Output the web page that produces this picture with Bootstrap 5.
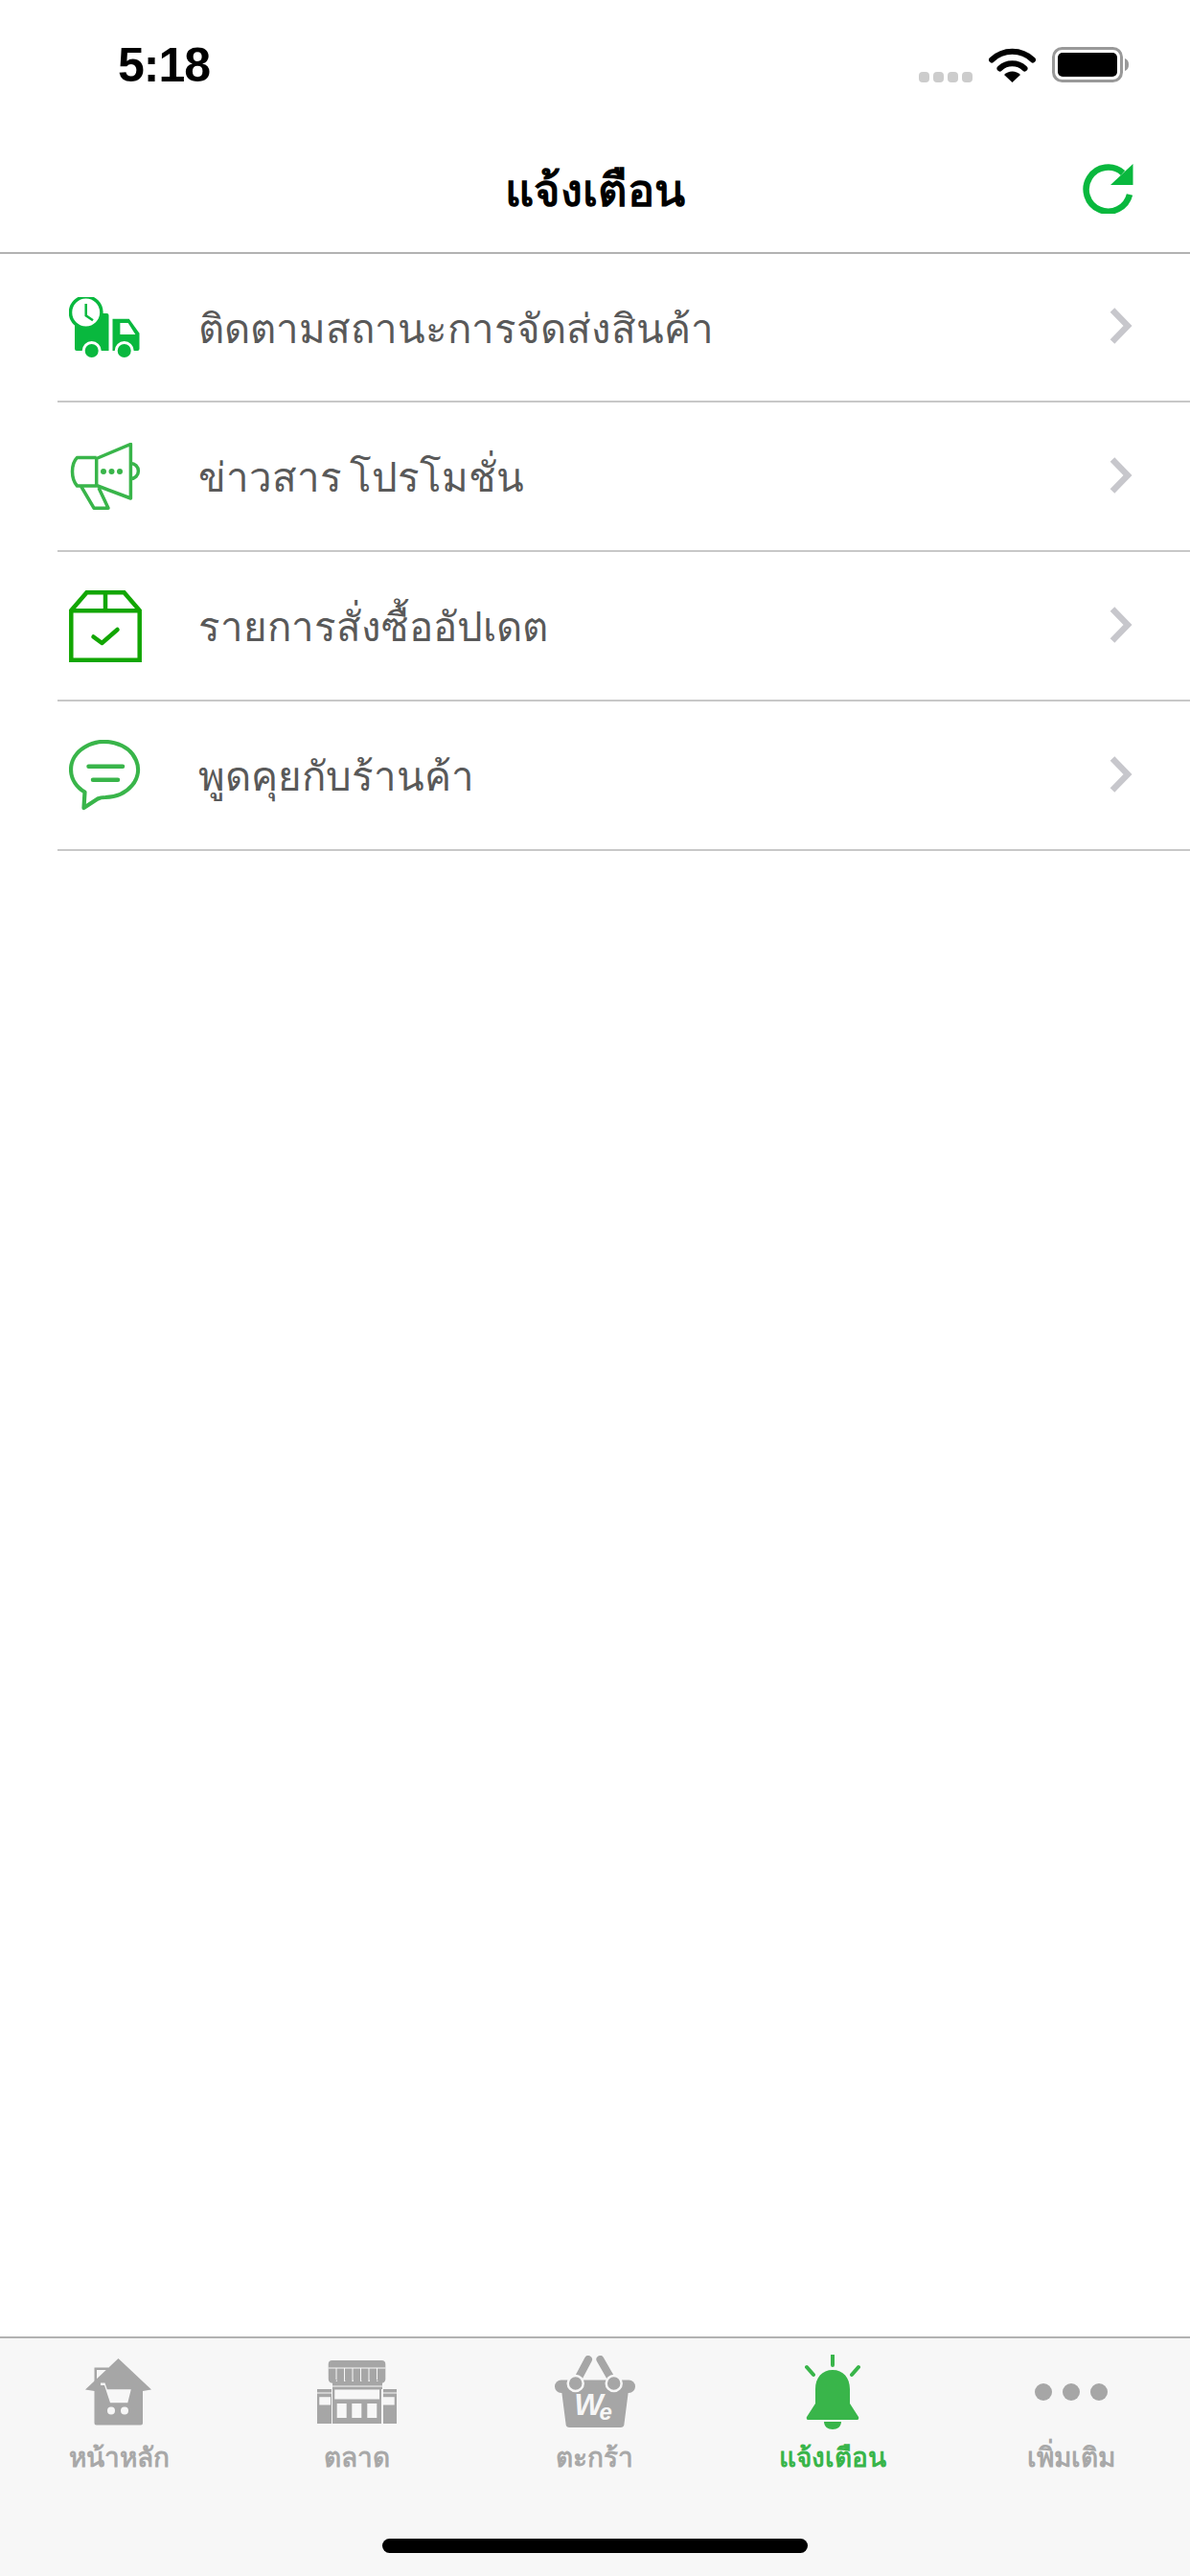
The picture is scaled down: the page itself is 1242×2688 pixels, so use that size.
<!DOCTYPE html>
<html lang="th">
<head>
    <meta charset="UTF-8">
    <meta name="viewport" content="width=device-width, initial-scale=1.0">
    <title>แจ้งเตือน</title>
    <link href="https://cdn.jsdelivr.net/npm/bootstrap@5.3.0/dist/css/bootstrap.min.css" rel="stylesheet">
    <style>
        html, body { height: 100%; }
        body { background: #fff; font-family: "Noto Sans", "Liberation Sans", sans-serif; }
        .phone-screen { height: 2688px; }

        .status-strip { height: 92px; padding: 0 64px 6px 123px; }
        .status-time { font-family: "Liberation Sans", sans-serif; font-size: 50px; font-weight: 700; line-height: 36px; color: #000; letter-spacing: -1px; }
        .status-icons { gap: 17px; }
        .signal-dots { gap: 4px; }
        .signal-dots span { width: 11px; height: 11px; background: #ccc; border-radius: 4px; }

        .title-bar { height: 173px; padding-top: 40px; border-bottom: 2px solid #b2b2b2; }
        .title-text { font-size: 47px; font-weight: 700; color: #000; line-height: 1; margin: 0; }
        .refresh-btn { right: 59px; top: 79px; width: 53px; height: 52px; }

        .notice-row { height: 156px; margin-left: 60px; padding-right: 60px; border-bottom: 2px solid #c8c8c8; }
        .notice-row:first-child { height: 155px; }
        .notice-icon { width: 76px; margin-left: 12px; margin-right: 59px; }
        .notice-text { font-size: 42px; color: #595959; line-height: 1; word-spacing: -3px; }
        .chevron-mark { width: 24px; height: 38px; margin-bottom: 3px; }

        .tab-strip { height: 250px; background: #f7f7f7; border-top: 2px solid #b2b2b2; }
        .tab-cell { width: 20%; padding-top: 16px; }
        .tab-art { height: 80px; }
        .tab-label { font-size: 28px; font-weight: 700; line-height: 1; color: #a8a8a8; margin-top: 13px; }
        .tab-label.is-on { color: #39b54a; }
        .home-pill { left: 399px; bottom: 24px; width: 444px; height: 15px; background: #000; border-radius: 8px; }
    </style>
</head>
<body>
    <div class="phone-screen d-flex flex-column position-relative overflow-hidden">
        <!-- status bar -->
        <div class="status-strip d-flex align-items-end justify-content-between">
            <span class="status-time">5:18</span>
            <div class="status-icons d-flex align-items-end">
                <div class="signal-dots d-flex mb-0"><span></span><span></span><span></span><span></span></div>
                <svg width="49" height="36" viewBox="0 0 49 36">
                    <path d="M3 12.500a31 31 0 0 1 43 0" fill="none" stroke="#000" stroke-width="6" stroke-linecap="round"/>
                    <path d="M11.500 21.500a19 19 0 0 1 26 0" fill="none" stroke="#000" stroke-width="6" stroke-linecap="round"/>
                    <path d="M24.500 36l-8.500-8a12 12 0 0 1 17 0z" fill="#000"/>
                </svg>
                <svg width="80" height="37" viewBox="0 0 80 37">
                    <rect x="1.500" y="1.500" width="71" height="34" rx="9" fill="none" stroke="#999" stroke-width="3"/>
                    <rect x="6" y="6" width="62" height="25" rx="5" fill="#000"/>
                    <path d="M76 12c3 1 4 3.500 4 6.500s-1 5.500-4 6.500z" fill="#999"/>
                </svg>
            </div>
        </div>

        <!-- title -->
        <div class="title-bar d-flex align-items-center justify-content-center position-relative">
            <h1 class="title-text">แจ้งเตือน</h1>
            <svg class="refresh-btn position-absolute" viewBox="0 0 53 52">
                <path d="M49 32A23 23 0 1 1 42 9.500" fill="none" stroke="#09b83e" stroke-width="6.500"/>
                <path d="M52.500 0v22H29z" fill="#09b83e"/>
            </svg>
        </div>

        <!-- list -->
        <div class="list-group list-group-flush flex-grow-1">
            <div class="notice-row d-flex align-items-center">
                <svg class="notice-icon" height="64" viewBox="0 0 76 64">
                    <path d="M6 17h33.500a2 2 0 0 1 2 2v37H8a2 2 0 0 1-2-2z" fill="#09b83e"/>
                    <path d="M45.500 22.700H62.700L73.500 37.700V54a2 2 0 0 1-2 2H45.500z" fill="#09b83e"/>
                    <path d="M53.400 27H61.700L69.300 39H53.400z" fill="#fff"/>
                    <circle cx="17.700" cy="16" r="16.200" fill="#fff" stroke="#09b83e" stroke-width="3.500"/>
                    <path d="M17.700 7V19.300L25 24.300" fill="none" stroke="#09b83e" stroke-width="2.500"/>
                    <circle cx="23.700" cy="56" r="8.500" fill="#09b83e" stroke="#fff" stroke-width="3"/>
                    <circle cx="57.700" cy="56" r="8.500" fill="#09b83e" stroke="#fff" stroke-width="3"/>
                </svg>
                <span class="notice-text flex-grow-1">ติดตามสถานะการจัดส่งสินค้า</span>
                <svg class="chevron-mark" viewBox="0 0 24 38"><path d="M3 2.500L19 19 3 35.500" fill="none" stroke="#c7c7cc" stroke-width="6.500"/></svg>
            </div>
            <div class="notice-row d-flex align-items-center">
                <svg class="notice-icon" height="70" viewBox="-2 0 76 70">
                    <g fill="none" stroke="#39b54a" stroke-width="3.500" stroke-linejoin="round">
                        <path d="M62.400 1.500L26.700 16.500V44.500L62.400 58z"/>
                        <path d="M26.700 15.500H6.500C3 19 1.500 24 1.500 30S3 41 6.500 45H26.700"/>
                        <path d="M10.700 45.500L24 68.200H39L29 47"/>
                        <path d="M62.400 21.500a8 8 0 0 1 0 16"/>
                    </g>
                    <circle cx="34" cy="30" r="3" fill="#39b54a"/><circle cx="42.500" cy="30" r="3" fill="#39b54a"/><circle cx="51" cy="30" r="3" fill="#39b54a"/>
                </svg>
                <span class="notice-text flex-grow-1">ข่าวสาร โปรโมชั่น</span>
                <svg class="chevron-mark" viewBox="0 0 24 38"><path d="M3 2.500L19 19 3 35.500" fill="none" stroke="#c7c7cc" stroke-width="6.500"/></svg>
            </div>
            <div class="notice-row d-flex align-items-center">
                <svg class="notice-icon" height="75" viewBox="0 0 76 75">
                    <g fill="none" stroke="#12a602" stroke-width="4.500">
                        <path d="M2.300 21L18.500 2.200H57.500L73.700 21V72.800H2.300z"/>
                        <path d="M2.300 21.300H73.700M38 2V21"/>
                    </g>
                    <path d="M25.500 48.500L34.400 55 50.500 41" fill="none" stroke="#12a602" stroke-width="4.500" stroke-linecap="round" stroke-linejoin="round"/>
                </svg>
                <span class="notice-text flex-grow-1">รายการสั่งซื้ออัปเดต</span>
                <svg class="chevron-mark" viewBox="0 0 24 38"><path d="M3 2.500L19 19 3 35.500" fill="none" stroke="#c7c7cc" stroke-width="6.500"/></svg>
            </div>
            <div class="notice-row d-flex align-items-center">
                <svg class="notice-icon" height="75" viewBox="0 0 76 75">
                    <path d="M15.500 71L16.500 54.500A35 29 0 1 1 38 60Q33 60 30 61.500z" fill="none" stroke="#39b54a" stroke-width="4.200" stroke-linejoin="round"/>
                    <path d="M20.500 27.700H56M25 41.700H51" stroke="#39b54a" stroke-width="4.500" stroke-linecap="round"/>
                </svg>
                <span class="notice-text flex-grow-1">พูดคุยกับร้านค้า</span>
                <svg class="chevron-mark" viewBox="0 0 24 38"><path d="M3 2.500L19 19 3 35.500" fill="none" stroke="#c7c7cc" stroke-width="6.500"/></svg>
            </div>
        </div>

        <!-- tab bar -->
        <div class="tab-strip d-flex">
            <div class="tab-cell d-flex flex-column align-items-center">
                <div class="tab-art d-flex align-items-center justify-content-center">
                    <svg width="70" height="70" viewBox="0 0 70 70">
                        <path d="M9.500 9.500H24V12H12V26H9.500z" fill="#a6a6a6"/>
                        <path d="M34.500 0L69 32.500 60 34V67.500a2 2 0 0 1-2 2H11.500a2 2 0 0 1-2-2V34L0 32.500z" fill="#a6a6a6"/>
                        <path d="M16 25.500h4.500l2.300 6.800h25l-3.500 14H26L20 28h-4z" fill="#f7f7f7"/>
                        <circle cx="27" cy="54.500" r="4" fill="#f7f7f7"/><circle cx="41" cy="54.500" r="4" fill="#f7f7f7"/>
                    </svg>
                </div>
                <span class="tab-label">หน้าหลัก</span>
            </div>
            <div class="tab-cell d-flex flex-column align-items-center">
                <div class="tab-art d-flex align-items-center justify-content-center">
                    <svg width="84" height="66" viewBox="0 0 84 66">
                        <path d="M16 22h52v44H16z" fill="#a6a6a6"/>
                        <path d="M0 30h15v36H0zM69 30h14v36H69z" fill="#a6a6a6"/>
                        <path d="M11.700 4a4 4 0 0 1 4-4h51.600a4 4 0 0 1 4 4v16a4.300 4.300 0 0 1-8.500 0 4.300 4.300 0 0 1-8.500 0 4.300 4.300 0 0 1-8.500 0 4.300 4.300 0 0 1-8.500 0 4.300 4.300 0 0 1-8.500 0 4.300 4.300 0 0 1-8.500 0 4.300 4.300 0 0 1-8.500 0z" fill="#a6a6a6"/>
                        <path d="M11.700 8H71.300M20 8V20M28.500 8V22M37 8V22M45.500 8V22M54 8V22M62.500 8V20M16 27H68M0 34H15M69 34H83M15.500 30V66M67.500 30V66" stroke="#f7f7f7" stroke-width="1" fill="none"/>
                        <path d="M18.300 30.600H65V40.600H18.300zM2.300 38.300H14V46.600H2.300zM69 38.300H80.700V46.600H69zM20.700 45H30.700V60H20.700zM36.300 45H46.300V60H36.300zM52.300 45H62.300V60H52.300z" fill="#f7f7f7"/>
                    </svg>
                </div>
                <span class="tab-label">ตลาด</span>
            </div>
            <div class="tab-cell d-flex flex-column align-items-center">
                <div class="tab-art d-flex align-items-center justify-content-center">
                    <svg width="84" height="76" viewBox="0 0 84 76">
                        <path d="M7 36L11.500 71a4 4 0 0 0 4 4H68.500a4 4 0 0 0 4-4L77 36z" fill="#a6a6a6"/>
                        <rect x="0" y="25.500" width="84" height="13.500" rx="6.700" fill="#a6a6a6"/>
                        <path d="M35 4L21.700 29M47.400 4L61.700 29" stroke="#a6a6a6" stroke-width="8" stroke-linecap="round"/>
                        <circle cx="21.700" cy="29" r="8" fill="#a6a6a6" stroke="#f7f7f7" stroke-width="2.500"/>
                        <circle cx="61.700" cy="29" r="8" fill="#a6a6a6" stroke="#f7f7f7" stroke-width="2.500"/>
                        <text x="40" y="62" text-anchor="middle" font-family="Liberation Sans" font-style="italic" font-weight="700" font-size="32" fill="#f7f7f7">W<tspan font-size="24" dx="-4" dy="5">e</tspan></text>
                    </svg>
                </div>
                <span class="tab-label">ตะกร้า</span>
            </div>
            <div class="tab-cell d-flex flex-column align-items-center">
                <div class="tab-art d-flex align-items-center justify-content-center">
                    <svg width="58" height="78" viewBox="0 0 58 78">
                        <path d="M29 1v10M2 13l7 8M56 13l-7 8" stroke="#39b54a" stroke-width="4" stroke-linecap="round"/>
                        <path d="M29 16c-11 0-18 8-18 20v15L2 65a2 2 0 0 0 2 3h50a2 2 0 0 0 2-3l-9-14V36c0-12-7-20-18-20z" fill="#39b54a"/>
                        <path d="M20 70h18c0 5-4 8-9 8s-9-3-9-8z" fill="#39b54a"/>
                    </svg>
                </div>
                <span class="tab-label is-on">แจ้งเตือน</span>
            </div>
            <div class="tab-cell d-flex flex-column align-items-center">
                <div class="tab-art d-flex align-items-center justify-content-center">
                    <svg width="76" height="18" viewBox="0 0 76 18">
                        <circle cx="9" cy="9" r="9" fill="#a6a6a6"/><circle cx="38" cy="9" r="9" fill="#a6a6a6"/><circle cx="67" cy="9" r="9" fill="#a6a6a6"/>
                    </svg>
                </div>
                <span class="tab-label">เพิ่มเติม</span>
            </div>
        </div>
        <div class="home-pill position-absolute"></div>
    </div>
    <script src="https://cdn.jsdelivr.net/npm/bootstrap@5.3.0/dist/js/bootstrap.bundle.min.js"></script>
</body>
</html>
